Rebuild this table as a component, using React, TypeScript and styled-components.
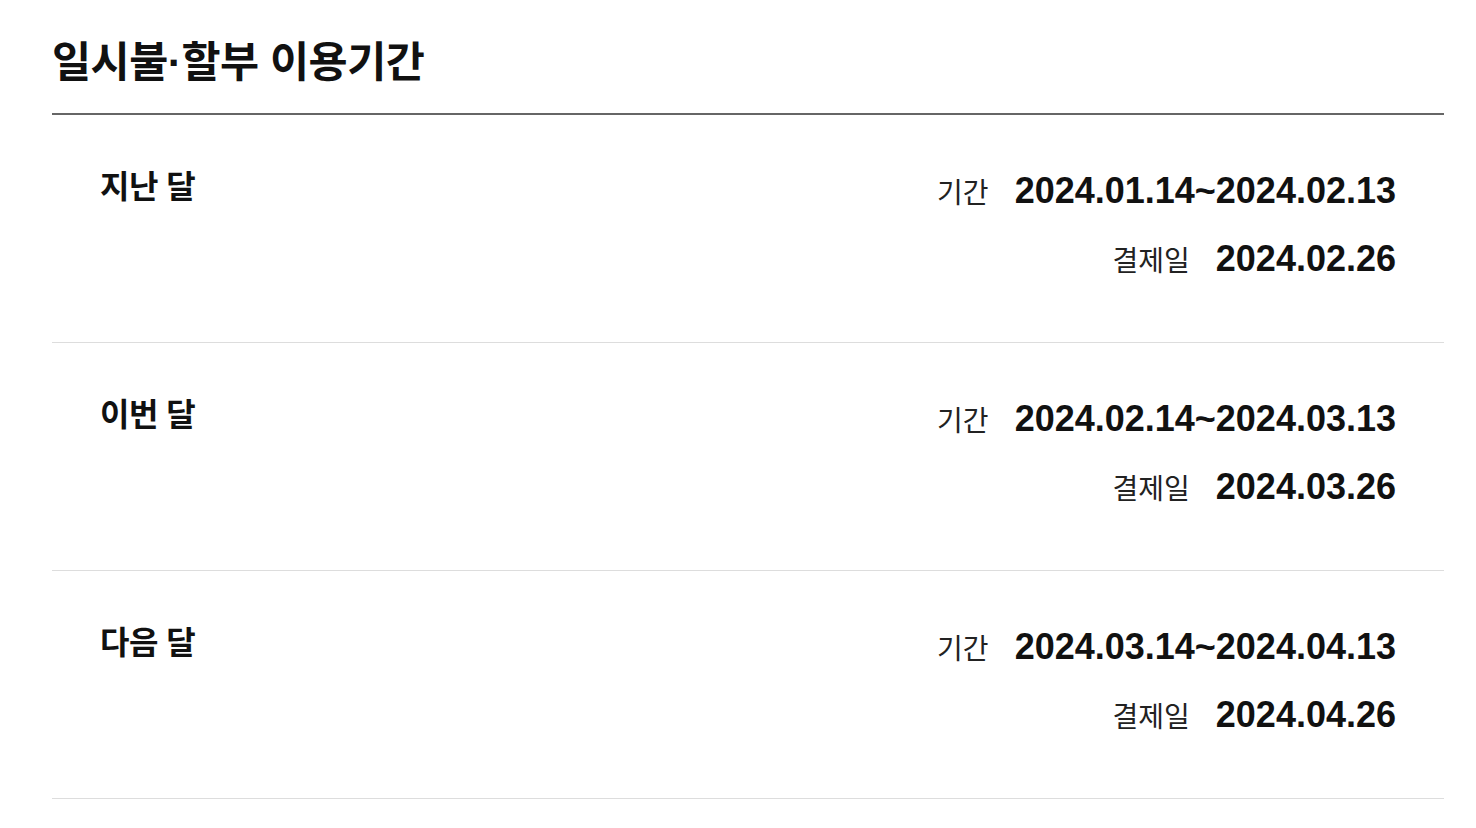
import React from 'react';
import styled, { createGlobalStyle } from 'styled-components';

const GlobalStyle = createGlobalStyle`
  body {
    margin: 0;
    background: #fff;
    color: #111;
    font-family: 'Liberation Sans', 'Noto Sans CJK KR', sans-serif;
  }
`;

const periods = [
  { label: '지난 달', range: '2024.01.14~2024.02.13', payDay: '2024.02.26' },
  { label: '이번 달', range: '2024.02.14~2024.03.13', payDay: '2024.03.26' },
  { label: '다음 달', range: '2024.03.14~2024.04.13', payDay: '2024.04.26' },
];

function App() {
  return (
    <>
      <GlobalStyle />
      <Section>
        <Title>일시불·할부 이용기간</Title>
        <List>
          {periods.map((p) => (
            <Row key={p.label}>
              <Label>{p.label}</Label>
              <Details>
                <Line>
                  <Key>기간</Key>
                  <Value>{p.range}</Value>
                </Line>
                <Line>
                  <Key>결제일</Key>
                  <Value>{p.payDay}</Value>
                </Line>
              </Details>
            </Row>
          ))}
        </List>
      </Section>
    </>
  );
}

export default App;

const Section = styled.section`
  margin: 0 32px 0 52px;
  padding-top: 35px;
`;

const Title = styled.h2`
  margin: 0;
  padding-bottom: 22px;
  font-size: 42.5px;
  font-weight: 700;
  letter-spacing: -0.5px;
  line-height: 56px;
  border-bottom: 2px solid #666;
`;

const List = styled.ul`
  margin: 0;
  padding: 0;
  list-style: none;
`;

const Row = styled.li`
  display: flex;
  justify-content: space-between;
  align-items: flex-start;
  height: 228px;
  padding: 52px 48px 0;
  box-sizing: border-box;
  border-bottom: 1px solid #ddd;
`;

const Label = styled.strong`
  font-size: 32px;
  font-weight: 700;
  line-height: 40px;
  letter-spacing: -0.5px;
`;

const Details = styled.div`
  display: flex;
  flex-direction: column;
  align-items: flex-end;
  gap: 20px;
`;

const Line = styled.div`
  display: flex;
  align-items: center;
  gap: 26px;
  height: 48px;
`;

const Key = styled.span`
  font-size: 28px;
  color: #222;
`;

const Value = styled.span`
  font-size: 36px;
  font-weight: 700;
`;
